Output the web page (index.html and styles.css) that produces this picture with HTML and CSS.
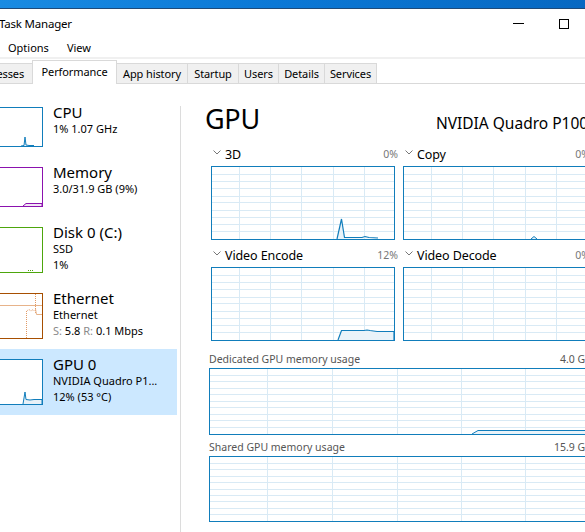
FILE: index.html
```html
<!DOCTYPE html>
<html lang="en">
<head>
<meta charset="utf-8">
<title>Task Manager</title>
<link rel="stylesheet" href="styles.css">
</head>
<body>
<div class="app">
  <div class="accent"></div>
  <div class="titlebar">
    <span class="title">Task Manager</span>
    <div class="controls">
      <span class="ctl-min"></span>
      <span class="ctl-max"></span>
    </div>
  </div>
  <div class="menubar">
    <span class="menu-item">Options</span>
    <span class="menu-item">View</span>
  </div>
  <div class="tabstrip">
    <div class="tabs">
      <span class="tab tab-processes">Processes</span>
      <span class="tab tab-active tab-performance">Performance</span>
      <span class="tab tab-apphistory">App history</span>
      <span class="tab tab-startup">Startup</span>
      <span class="tab tab-users">Users</span>
      <span class="tab tab-details">Details</span>
      <span class="tab tab-services">Services</span>
    </div>
  </div>
  <div class="content">
    <aside class="sidebar">
      <div class="item">
        <div class="thumb thumb-cpu h40">
          <svg width="68" height="38" viewBox="0 0 68 38"><polyline points="47,38 50,37.5 51,29 52,37 55,37.5 60,37.5" fill="#e3eff8" stroke="#117dbb" stroke-width="1"/></svg>
        </div>
        <div class="info">
          <div class="name">CPU</div>
          <div class="sub">1% 1.07 GHz</div>
        </div>
      </div>
      <div class="item">
        <div class="thumb thumb-mem h40">
          <svg width="68" height="38" viewBox="0 0 68 38"><polyline points="49,38 52,35.5 68,35.5 68,38" fill="#f2e6f6" stroke="#8b12ae" stroke-width="1"/></svg>
        </div>
        <div class="info">
          <div class="name">Memory</div>
          <div class="sub">3.0/31.9 GB (9%)</div>
        </div>
      </div>
      <div class="item">
        <div class="thumb thumb-disk h46">
          <svg width="68" height="44" viewBox="0 0 68 44"><path d="M54 42.5h1M56 42.5h1M58 42.5h1" stroke="#4da60c" stroke-width="1"/></svg>
        </div>
        <div class="info">
          <div class="name">Disk 0 (C:)</div>
          <div class="sub">SSD</div>
          <div class="sub">1%</div>
        </div>
      </div>
      <div class="item">
        <div class="thumb thumb-eth h46">
          <svg width="68" height="44" viewBox="0 0 68 44">
            <path d="M0 11.5H68" stroke="#e7b38a" stroke-width="1"/>
            <polyline points="52.5,44 52.5,17 55,15.5 57,17 59,15.5 60.5,17" fill="none" stroke="#e19a66" stroke-width="1" stroke-dasharray="1 1"/>
            <path d="M61.5 0V19" stroke="#e19a66" stroke-width="1" stroke-dasharray="1 1"/>
            <polyline points="61.5,15 62.5,20.5 68,20.5" fill="none" stroke="#e7b38a" stroke-width="1"/>
          </svg>
        </div>
        <div class="info">
          <div class="name">Ethernet</div>
          <div class="sub">Ethernet</div>
          <div class="sub"><span class="muted">S:</span> 5.8 <span class="muted">R:</span> 0.1 Mbps</div>
        </div>
      </div>
      <div class="item item-selected">
        <div class="thumb thumb-gpu h46">
          <svg width="68" height="44" viewBox="0 0 68 44"><polyline points="49,44 51,32 52,39.5 56,40 60,39.5 68,39.5 68,44" fill="#e8f1f8" stroke="#117dbb" stroke-width="1"/></svg>
        </div>
        <div class="info">
          <div class="name">GPU 0</div>
          <div class="sub">NVIDIA Quadro P1...</div>
          <div class="sub">12% (53 °C)</div>
        </div>
      </div>
    </aside>
    <div class="divider"></div>
    <main class="main">
      <div class="header">
        <span class="heading">GPU</span>
        <span class="model">NVIDIA Quadro P1000</span>
      </div>
      <div class="engines">
        <div class="engine">
          <div class="engine-label">
            <svg class="chev" width="8" height="5" viewBox="0 0 8 5"><polyline points="0.5,0.5 4,4 7.5,0.5" fill="none" stroke="#777" stroke-width="1"/></svg>
            <span class="engine-name">3D</span>
            <span class="pct">0%</span>
          </div>
          <div class="graph small">
            <svg width="182" height="72" viewBox="0 0 182 72">
              <path class="grid" d="M27.5 0V72M58.5 0V72M89.5 0V72M121.5 0V72M152.5 0V72M0 7.5H182M0 14.5H182M0 21.5H182M0 29.5H182M0 35.5H182M0 43.5H182M0 50.5H182M0 57.5H182M0 64.5H182"/>
              <polyline points="125,72 129.5,52 132.5,70.5 150,70.5 153,69.5 157,70.5 166,71" fill="#eaf3f9" stroke="#117dbb" stroke-width="1.2"/>
            </svg>
          </div>
        </div>
        <div class="engine">
          <div class="engine-label">
            <svg class="chev" width="8" height="5" viewBox="0 0 8 5"><polyline points="0.5,0.5 4,4 7.5,0.5" fill="none" stroke="#777" stroke-width="1"/></svg>
            <span class="engine-name">Copy</span>
            <span class="pct">0%</span>
          </div>
          <div class="graph small">
            <svg width="182" height="72" viewBox="0 0 182 72">
              <path class="grid" d="M27.5 0V72M58.5 0V72M89.5 0V72M121.5 0V72M152.5 0V72M0 7.5H182M0 14.5H182M0 21.5H182M0 29.5H182M0 35.5H182M0 43.5H182M0 50.5H182M0 57.5H182M0 64.5H182"/>
              <polyline points="127,72 130,69.5 133,72" fill="#eaf3f9" stroke="#117dbb" stroke-width="1"/>
            </svg>
          </div>
        </div>
        <div class="engine">
          <div class="engine-label">
            <svg class="chev" width="8" height="5" viewBox="0 0 8 5"><polyline points="0.5,0.5 4,4 7.5,0.5" fill="none" stroke="#777" stroke-width="1"/></svg>
            <span class="engine-name">Video Encode</span>
            <span class="pct">12%</span>
          </div>
          <div class="graph small">
            <svg width="182" height="72" viewBox="0 0 182 72">
              <path class="grid" d="M27.5 0V72M58.5 0V72M89.5 0V72M121.5 0V72M152.5 0V72M0 7.5H182M0 14.5H182M0 21.5H182M0 29.5H182M0 35.5H182M0 43.5H182M0 50.5H182M0 57.5H182M0 64.5H182"/>
              <polyline points="126,72 129.5,62.5 152,62.5 155,62 158,62.5 165,63.5 182,63.5 182,72" fill="#eaf3f9" stroke="#117dbb" stroke-width="1.2"/>
            </svg>
          </div>
        </div>
        <div class="engine">
          <div class="engine-label">
            <svg class="chev" width="8" height="5" viewBox="0 0 8 5"><polyline points="0.5,0.5 4,4 7.5,0.5" fill="none" stroke="#777" stroke-width="1"/></svg>
            <span class="engine-name">Video Decode</span>
            <span class="pct">0%</span>
          </div>
          <div class="graph small">
            <svg width="182" height="72" viewBox="0 0 182 72">
              <path class="grid" d="M27.5 0V72M58.5 0V72M89.5 0V72M121.5 0V72M152.5 0V72M0 7.5H182M0 14.5H182M0 21.5H182M0 29.5H182M0 35.5H182M0 43.5H182M0 50.5H182M0 57.5H182M0 64.5H182"/>
            </svg>
          </div>
        </div>
      </div>
      <div class="memory">
        <div class="mem-label">
          <span>Dedicated GPU memory usage</span>
          <span>4.0 GB</span>
        </div>
        <div class="graph big dedicated">
          <svg width="379" height="65" viewBox="0 0 379 65">
            <path class="grid" d="M57.5 0V65M122.5 0V65M187.5 0V65M251.5 0V65M315.5 0V65M0 6.5H379M0 12.5H379M0 19.5H379M0 25.5H379M0 32.5H379M0 38.5H379M0 45.5H379M0 51.5H379M0 58.5H379"/>
            <polyline points="262,65 268,61.5 379,61.5 379,65" fill="#eaf3f9" stroke="#117dbb" stroke-width="1"/>
          </svg>
        </div>
      </div>
      <div class="memory shared">
        <div class="mem-label">
          <span>Shared GPU memory usage</span>
          <span>15.9 GB</span>
        </div>
        <div class="graph big">
          <svg width="379" height="64" viewBox="0 0 379 64">
            <path class="grid" d="M57.5 0V64M122.5 0V64M187.5 0V64M251.5 0V64M315.5 0V64M0 6.5H379M0 12.5H379M0 19.5H379M0 25.5H379M0 32.5H379M0 38.5H379M0 44.5H379M0 51.5H379M0 57.5H379"/>
          </svg>
        </div>
      </div>
    </main>
  </div>
</div>
</body>
</html>
```
FILE: styles.css
```css
html, body {
  margin: 0;
  padding: 0;
  height: 532px;
  overflow: hidden;
  background: #ffffff;
}

.app {
  width: 610px;
  height: 532px;
  font-family: "Noto Sans", "Open Sans", sans-serif;
  font-size: 11px;
  color: #000;
  overflow: hidden;
}

.accent {
  height: 8px;
  background: linear-gradient(90deg, #1a8be2 0%, #0b78d6 45%, #0767c0 100%);
  border-bottom: 1px solid #1f4a78;
}

.titlebar {
  height: 29px;
  display: flex;
  align-items: center;
  justify-content: space-between;
}

.title {
  font-size: 11.5px;
  letter-spacing: -0.2px;
  margin-left: -1px;
  margin-top: -1px;
}

.controls {
  display: flex;
  align-items: center;
  margin-right: 41px;
}

.ctl-min {
  width: 11px;
  height: 1px;
  background: #000;
}

.ctl-max {
  width: 8px;
  height: 8px;
  border: 1px solid #000;
  margin-left: 35px;
}

.menubar {
  height: 19px;
  display: flex;
  align-items: center;
  gap: 18px;
  padding-left: 8px;
}

.menu-item {
  font-size: 11px;
}

.tabstrip {
  border-top: 2px solid #f0f0f0;
  display: flex;
  align-items: flex-end;
  border-bottom: 1px solid #d9d9d9;
  box-sizing: border-box;
  height: 27px;
}

.tabs {
  display: flex;
  align-items: flex-end;
  margin-left: -35px;
  height: 100%;
}

.tab {
  box-sizing: border-box;
  height: 20px;
  display: flex;
  align-items: center;
  justify-content: center;
  background: #f0f0f0;
  border: 1px solid #d9d9d9;
  border-bottom: none;
  margin-right: -1px;
  font-size: 11px;
  letter-spacing: -0.1px;
  padding-bottom: 1px;
}

.tab-active {
  background: #ffffff;
  height: 24px;
  margin-bottom: -1px;
  padding-bottom: 2px;
  position: relative;
  z-index: 1;
}

.tab-processes { width: 68px; }
.tab-performance { width: 85px; }
.tab-apphistory { width: 72px; }
.tab-startup { width: 52px; }
.tab-users { width: 41px; }
.tab-details { width: 47px; }
.tab-services { width: 53px; }

.content {
  display: flex;
  height: 448px;
}

.sidebar {
  width: 180px;
  flex: none;
  padding-top: 13px;
  box-sizing: border-box;
}

.item {
  width: 177px;
  display: flex;
  align-items: flex-start;
  padding: 10px 0;
  box-sizing: border-box;
}

.item-selected {
  background: #cce8ff;
}

.thumb {
  width: 70px;
  box-sizing: border-box;
  border: 1px solid #117dbb;
  margin-left: -27px;
  flex: none;
  background: #fff;
}

.thumb svg { display: block; }

.h40 { height: 40px; }
.h46 { height: 46px; }

.thumb-cpu { border-color: #117dbb; }
.thumb-mem { border-color: #8b12ae; }
.thumb-disk { border-color: #4da60c; }
.thumb-eth { border-color: #a74f01; }
.thumb-gpu { border-color: #117dbb; }

.info {
  margin-left: 10px;
  margin-top: -3px;
}

.name {
  font-size: 15px;
  line-height: 17px;
}

.sub {
  font-size: 11px;
  line-height: 16px;
  white-space: nowrap;
}

.muted {
  color: #8a8a8a;
}

.divider {
  width: 1px;
  flex: none;
  background: #dcdcdc;
  margin-top: 22px;
}

.main {
  flex: 1;
  padding-left: 24px;
  box-sizing: border-box;
}

.header {
  display: flex;
  align-items: baseline;
  justify-content: space-between;
  padding-top: 19px;
  height: 61px;
  box-sizing: border-box;
  padding-right: 13px;
}

.heading {
  font-size: 27px;
  line-height: 32px;
  letter-spacing: -0.3px;
}

.model {
  font-size: 15.5px;
  line-height: 20px;
}

.engines {
  display: grid;
  grid-template-columns: 184px 184px;
  column-gap: 8px;
  row-gap: 6px;
  margin-left: 6px;
}

.engine-label {
  height: 21px;
  display: flex;
  align-items: center;
  padding-left: 2px;
  padding-bottom: 3px;
  box-sizing: border-box;
  margin-right: -3px;
}

.chev {
  display: block;
  margin-right: 4px;
  margin-top: -3px;
}

.engine-name {
  font-size: 12.5px;
  flex: 1;
  letter-spacing: -0.1px;
}

.pct {
  font-size: 10.5px;
  color: #777;
}

.graph {
  border: 1px solid #117dbb;
  box-sizing: border-box;
  background: #fff;
}

.graph svg {
  display: block;
}

.graph .grid {
  stroke: #d9eaf5;
  stroke-width: 1;
  fill: none;
  shape-rendering: crispEdges;
}

.small {
  width: 184px;
  height: 74px;
}

.memory {
  margin-left: 4px;
  margin-top: 9px;
}

.memory.shared {
  margin-top: 3px;
}

.mem-label {
  height: 18px;
  display: flex;
  align-items: center;
  justify-content: space-between;
  font-size: 10.5px;
  color: #555;
  width: 383px;
}

.big {
  width: 381px;
  height: 67px;
}

.shared .big {
  height: 66px;
}
```
